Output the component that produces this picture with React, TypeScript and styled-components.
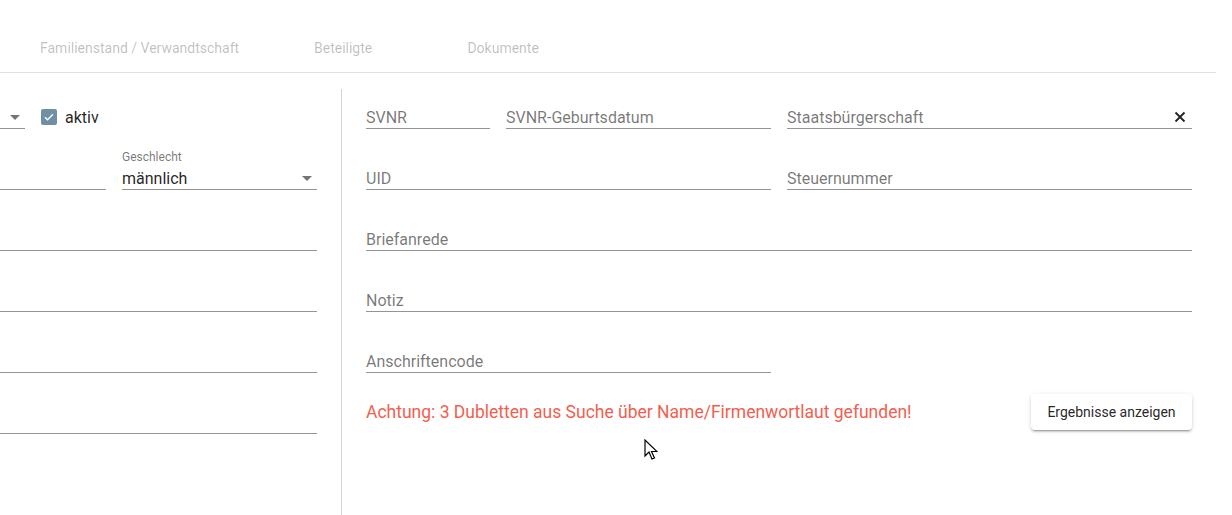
import React from "react";
import styled, { createGlobalStyle } from "styled-components";

const Global = createGlobalStyle`
  html, body, #root { margin: 0; padding: 0; height: 100%; }
  body { font-family: Roboto, "Liberation Sans", Arial, sans-serif; background: #fff; overflow: hidden; }
  * { box-sizing: border-box; }
`;

const Page = styled.div`
  position: relative;
  width: 1216px;
  height: 100vh;
  display: flex;
  flex-direction: column;
`;

const Header = styled.div`
  height: 73px;
  padding: 24px 0 0 16px;
  border-bottom: 1px solid #e0e0e0;
  display: flex;
`;

const Tab = styled.div`
  min-width: 160px;
  height: 48px;
  padding: 0 24px;
  display: flex;
  align-items: center;
  justify-content: center;
  font-size: 14px;
  font-weight: 400;
  color: rgba(0, 0, 0, 0.26);
  white-space: nowrap;
`;

const Main = styled.div`
  flex: 1;
  display: flex;
  padding-top: 16px;
`;

const LeftPanel = styled.div`
  width: 317px;
  margin-right: 24px;
  display: flex;
  flex-direction: column;
  gap: 21px;
`;

const Divider = styled.div`
  width: 1px;
  background: #d4d4d4;
  align-self: stretch;
`;

const RightPanel = styled.div`
  width: 826px;
  margin-left: 24px;
  display: flex;
  flex-direction: column;
  gap: 21px;
`;

const Row = styled.div`
  height: 40px;
  display: flex;
  gap: 16px;
  align-items: flex-end;
`;

const HalfRow = styled.div`
  height: 40px;
  display: grid;
  grid-template-columns: 1fr 1fr;
  gap: 16px;
  align-items: end;
`;

const Field = styled.div<{ $w?: number; $grow?: boolean }>`
  position: relative;
  ${(p) => (p.$w ? `width: ${p.$w}px; flex: none;` : "")}
  ${(p) => (p.$grow ? "flex: 1;" : "")}
  height: 40px;
  border-bottom: 1px solid rgba(0, 0, 0, 0.42);
  display: flex;
  align-items: flex-end;
  justify-content: space-between;
  padding-bottom: 1px;
`;

const Placeholder = styled.span`
  font-size: 16px;
  line-height: 19px;
  color: rgba(0, 0, 0, 0.54);
  white-space: nowrap;
`;

const Value = styled.span`
  font-size: 16px;
  line-height: 19px;
  color: rgba(0, 0, 0, 0.87);
`;

const SmallLabel = styled.span`
  position: absolute;
  left: 0;
  top: 0;
  font-size: 12px;
  line-height: 14px;
  color: rgba(0, 0, 0, 0.54);
`;

const Arrow = styled.span`
  width: 0;
  height: 0;
  border-left: 5px solid transparent;
  border-right: 5px solid transparent;
  border-top: 5px solid rgba(0, 0, 0, 0.54);
  margin: 0 5px 7px 0;
`;

const CheckWrap = styled.label`
  display: flex;
  align-items: center;
  gap: 8px;
  height: 24px;
  align-self: flex-end;
`;

const CheckBox = styled.span`
  width: 16px;
  height: 16px;
  border-radius: 2px;
  background: #6f8fa4;
  display: flex;
  align-items: center;
  justify-content: center;
`;

const CheckLabel = styled.span`
  font-size: 16px;
  color: rgba(0, 0, 0, 0.87);
`;

const ClearBtn = styled.span`
  display: flex;
  width: 12px;
  height: 12px;
  margin: 0 6px 4px 0;
`;

const NoticeRow = styled.div`
  height: 40px;
  display: flex;
  justify-content: space-between;
  align-items: flex-start;
`;

const Warning = styled.span`
  padding-top: 8px;
  font-size: 17.5px;
  line-height: 20px;
  color: #f2604f;
  white-space: nowrap;
`;

const RaisedButton = styled.button`
  height: 36px;
  width: 161px;
  border: none;
  border-radius: 4px;
  background: #fff;
  font-family: Roboto, "Liberation Sans", Arial, sans-serif;
  font-size: 14px;
  font-weight: 400;
  white-space: nowrap;
  color: rgba(0, 0, 0, 0.87);
  box-shadow: 0 3px 1px -2px rgba(0, 0, 0, 0.2), 0 2px 2px 0 rgba(0, 0, 0, 0.14),
    0 1px 5px 0 rgba(0, 0, 0, 0.12);
  padding: 0 12px;
`;

const Cursor = styled.svg`
  position: absolute;
  left: 644px;
  top: 439px;
`;

export default function App() {
  return (
    <Page>
      <Global />
      <Header>
        <Tab>Familienstand / Verwandtschaft</Tab>
        <Tab>Beteiligte</Tab>
        <Tab>Dokumente</Tab>
      </Header>
      <Main>
        <LeftPanel>
          <Row>
            <Field $w={25}>
              <span />
              <Arrow />
            </Field>
            <CheckWrap>
              <CheckBox>
                <svg width="12" height="12" viewBox="0 0 24 24">
                  <path d="M4 12.5l5 5L20 6.5" fill="none" stroke="#fff" strokeWidth="2.6" />
                </svg>
              </CheckBox>
              <CheckLabel>aktiv</CheckLabel>
            </CheckWrap>
          </Row>
          <Row>
            <Field $w={106} />
            <Field $grow>
              <SmallLabel>Geschlecht</SmallLabel>
              <Value>männlich</Value>
              <Arrow />
            </Field>
          </Row>
          <Row><Field $grow /></Row>
          <Row><Field $grow /></Row>
          <Row><Field $grow /></Row>
          <Row><Field $grow /></Row>
        </LeftPanel>
        <Divider />
        <RightPanel>
          <HalfRow>
            <Row>
              <Field $w={124}><Placeholder>SVNR</Placeholder></Field>
              <Field $grow><Placeholder>SVNR-Geburtsdatum</Placeholder></Field>
            </Row>
            <Field>
              <Placeholder>Staatsbürgerschaft</Placeholder>
              <ClearBtn>
                <svg width="12" height="12" viewBox="0 0 12 12">
                  <path d="M1.5 1.5l9 9M10.5 1.5l-9 9" stroke="#222" strokeWidth="1.8" />
                </svg>
              </ClearBtn>
            </Field>
          </HalfRow>
          <HalfRow>
            <Field><Placeholder>UID</Placeholder></Field>
            <Field><Placeholder>Steuernummer</Placeholder></Field>
          </HalfRow>
          <Row><Field $grow><Placeholder>Briefanrede</Placeholder></Field></Row>
          <Row><Field $grow><Placeholder>Notiz</Placeholder></Field></Row>
          <HalfRow>
            <Field><Placeholder>Anschriftencode</Placeholder></Field>
            <span />
          </HalfRow>
          <NoticeRow>
            <Warning>Achtung: 3 Dubletten aus Suche über Name/Firmenwortlaut gefunden!</Warning>
            <RaisedButton>Ergebnisse anzeigen</RaisedButton>
          </NoticeRow>
        </RightPanel>
      </Main>
      <Cursor width="14" height="22" viewBox="0 0 14 22">
        <path d="M1 1v16l4-4 3 7 2.5-1-3-6.5H13z" fill="#fff" stroke="#000" strokeWidth="1.2" strokeLinejoin="miter" />
      </Cursor>
    </Page>
  );
}
